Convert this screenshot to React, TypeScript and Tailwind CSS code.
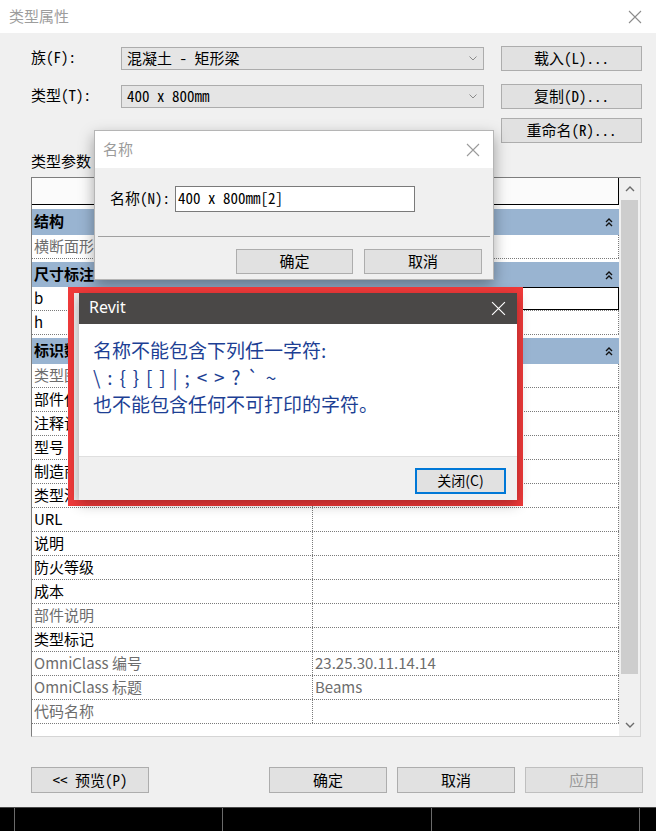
import React from "react";

const sans = "font-['Noto_Sans_CJK_SC',sans-serif]";
const song = "font-['Noto_Sans_Mono_CJK_SC','Noto_Sans_CJK_SC',monospace]";

type Row = { name: string; value?: string; gray?: boolean; selected?: boolean };
type Group = { title: string; gap: string; height: string; rows: Row[] };

const groups: Group[] = [
	{ title: "结构", gap: "mt-[4px]", height: "h-[26px]", rows: [{ name: "横断面形状", gray: true }] },
	{
		title: "尺寸标注",
		gap: "mt-[3px]",
		height: "h-[25px]",
		rows: [{ name: "b", selected: true }, { name: "h" }],
	},
	{
		title: "标识数据",
		gap: "mt-[3px]",
		height: "h-[26px]",
		rows: [
			{ name: "类型图像", gray: true },
			{ name: "部件代码" },
			{ name: "注释记号" },
			{ name: "型号" },
			{ name: "制造商" },
			{ name: "类型注释" },
			{ name: "URL" },
			{ name: "说明" },
			{ name: "防火等级" },
			{ name: "成本" },
			{ name: "部件说明", gray: true },
			{ name: "类型标记" },
			{ name: "OmniClass 编号", value: "23.25.30.11.14.14", gray: true },
			{ name: "OmniClass 标题", value: "Beams", gray: true },
			{ name: "代码名称", gray: true },
		],
	},
];

const Close = ({ color, size = 14 }: { color: string; size?: number }) => (
	<svg width={size} height={size} viewBox="0 0 14 14">
		<path d="M1 1 L13 13 M13 1 L1 13" stroke={color} strokeWidth="1.1" fill="none" />
	</svg>
);

const Collapse = () => (
	<svg width="8" height="10" viewBox="0 0 8 10">
		<path d="M1 5 L4 2 L7 5 M1 9 L4 6 L7 9" stroke="#111" strokeWidth="1.4" fill="none" />
	</svg>
);

const Chevron = ({ up, color = "#6b6b6b" }: { up?: boolean; color?: string }) => (
	<svg width="10" height="6" viewBox="0 0 10 6">
		<path d={up ? "M1 5 L5 1 L9 5" : "M1 1 L5 5 L9 1"} stroke={color} strokeWidth="1.4" fill="none" />
	</svg>
);

const Btn = ({ children, className = "" }: { children: React.ReactNode; className?: string }) => (
	<div
		className={
			"flex items-center justify-center border border-[#adadad] bg-[#e1e1e1] pb-[2px] text-[15px] leading-none text-black " +
			song +
			" " +
			className
		}
	>
		{children}
	</div>
);

const Select = ({ text }: { text: string }) => (
	<div className="flex h-[23px] w-[363px] items-center justify-between border border-[#acacac] bg-[#e5e5e5] pl-[5px] pr-[6px]">
		<span className={"pb-[3px] text-[15px] leading-none text-black " + song}>{text}</span>
		<svg width="8" height="5" viewBox="0 0 8 5">
			<path d="M0.5 0.5 L4 4 L7.5 0.5" stroke="#8a8a8a" strokeWidth="1" fill="none" />
		</svg>
	</div>
);

const App = () => {
	return (
		<div className={"relative flex h-[831px] w-[656px] flex-col overflow-hidden bg-[#f0f0f0] " + sans}>
			{/* window title */}
			<div className="flex h-[33px] shrink-0 items-center justify-between bg-white pl-[9px] pr-[14px]">
				<span className="pb-[2px] text-[15px] leading-none text-[#9d9d9d]">类型属性</span>
				<Close color="#8c8c8c" />
			</div>

			{/* family / type rows */}
			<div className="flex flex-col pl-[31px] pt-[13px]">
				<div className="flex h-[25px] items-center">
					<span className={"w-[90px] pb-[4px] text-[15px] leading-none " + song}>族(F):</span>
					<Select text="混凝土 - 矩形梁" />
					<Btn className="ml-[17px] h-[25px] w-[141px]">载入(L)...</Btn>
				</div>
				<div className="mt-[13px] flex h-[25px] items-center">
					<span className={"w-[90px] pb-[4px] text-[15px] leading-none " + song}>类型(T):</span>
					<Select text="400 x 800mm" />
					<Btn className="ml-[17px] h-[25px] w-[141px]">复制(D)...</Btn>
				</div>
				<div className="mt-[9px] flex h-[25px]">
					<Btn className="ml-[470px] h-[25px] w-[141px]">重命名(R)...</Btn>
				</div>
				<div className={"mt-[8px] flex h-[20px] items-center pb-[2px] text-[15px] leading-none " + song}>类型参数</div>
			</div>

			{/* parameter table */}
			<div className="ml-[31px] mt-[6px] flex h-[560px] w-[610px] shrink-0 border border-[#7d7d7d] border-b-[#d5d5d5] border-r-[#d5d5d5] bg-white">
				<div className="flex w-[587px] flex-col">
					<div className="h-[27px] border-b border-r border-black bg-[#fbfbfb]" />
					{groups.map((g) => (
						<div key={g.title} className={"flex flex-col " + g.gap}>
							<div
								className={
									"flex items-center justify-between bg-[#99b4d1] pl-[2px] pr-[6px] text-[15px] font-bold leading-none text-black " +
									g.height
								}
							>
								<span className="pb-[3px]">{g.title}</span>
								<Collapse />
							</div>
							{g.rows.map((r) => (
								<div
									key={r.name}
									className={
										"flex h-[24px] border-b border-dotted border-[#7a7a7a] text-[15px] leading-none " +
										(r.gray ? "text-[#6d6d6d]" : "text-black")
									}
								>
									<div className="flex w-[281px] items-center border-r border-dotted border-[#7a7a7a] pb-[3px] pl-[2px]">
										{r.name}
									</div>
									<div
										className={
											"flex flex-1 items-center pb-[3px] pl-[2px] " +
											(r.selected ? "border border-black" : "border-r border-dotted border-[#7a7a7a]")
										}
									>
										{r.value}
									</div>
								</div>
							))}
						</div>
					))}
				</div>
				<div className="flex w-[21px] flex-col items-center bg-[#f0f0f0]">
					<div className="flex h-[22px] items-center">
						<Chevron up />
					</div>
					<div className="h-[474px] w-[17px] bg-[#cdcdcd]" />
					<div className="flex-1" />
					<div className="flex h-[22px] items-center">
						<Chevron />
					</div>
				</div>
			</div>

			{/* bottom buttons */}
			<div className="mt-[30px] flex h-[26px] shrink-0 pl-[31px]">
				<Btn className="h-[26px] w-[118px]">{"<< 预览(P)"}</Btn>
				<Btn className="ml-[120px] h-[26px] w-[118px]">确定</Btn>
				<Btn className="ml-[10px] h-[26px] w-[118px]">取消</Btn>
				<Btn className="ml-[10px] h-[26px] w-[118px] border-[#bfbfbf] bg-[#cccccc] !text-[#9a9a9a]">应用</Btn>
			</div>

			{/* taskbar strip */}
			<div className="mt-[14px] flex flex-1 border-t border-[#4a4a4a] bg-black pl-[14px]">
				<div className="w-[208px] border-l border-[#6a6a6a]" />
				<div className="w-[209px] border-l border-[#6a6a6a]" />
				<div className="w-[208px] border-l border-[#6a6a6a]" />
				<div className="w-[2px] border-l border-[#6a6a6a]" />
			</div>

			{/* rename dialog */}
			<div className="absolute left-[94px] top-[130px] flex h-[150px] w-[400px] flex-col border border-[#b5b5b5] bg-[#f0f0f0] shadow-[0_6px_14px_rgba(0,0,0,0.35)]">
				<div className="flex h-[37px] items-center justify-between bg-white pl-[8px] pr-[13px]">
					<span className="pb-[2px] text-[15px] leading-none text-[#9b9b9b]">名称</span>
					<Close color="#9b9b9b" />
				</div>
				<div className="mt-[18px] flex h-[26px] items-center pl-[15px]">
					<span className={"w-[65px] pb-[4px] text-[15px] leading-none " + song}>名称(N):</span>
					<div className={"flex h-[26px] w-[240px] items-center border border-[#7a7a7a] bg-white pb-[3px] pl-[2px] text-[15px] leading-none " + song}>
						400 x 800mm[2]
					</div>
				</div>
				<div className="mx-[3px] mt-[24px] border-t border-[#a0a0a0]" />
				<div className="mt-[12px] flex justify-end gap-[11px] pr-[11px]">
					<Btn className="h-[25px] w-[117px]">确定</Btn>
					<Btn className="h-[25px] w-[118px]">取消</Btn>
				</div>
			</div>

			{/* error dialog with red highlight */}
			<div className="absolute left-[68px] top-[287px] flex h-[219px] w-[455px] border-[6px] border-[#f03a3a] bg-[#ededed] pl-[5px]">
				<div className="flex flex-1 flex-col shadow-[0_4px_12px_rgba(0,0,0,0.3)]">
					<div className="flex h-[31px] items-center justify-between bg-[#4a4847] pl-[10px] pr-[11px]">
						<span className="pb-[3px] font-['Noto_Sans',sans-serif] text-[16px] leading-none text-white">Revit</span>
						<Close color="#ffffff" size={15} />
					</div>
					<div className="flex h-[132px] flex-col bg-white pl-[14px] pt-[12px] text-[19px] leading-[27px] text-[#1d3f94]">
						<span>名称不能包含下列任一字符:</span>
						<span className="tracking-[1.3px]">{"\\ : { } [ ] | ; < > ? ` ~"}</span>
						<span>也不能包含任何不可打印的字符。</span>
					</div>
					<div className="flex flex-1 justify-end border-t border-[#dfdfdf] bg-[#f0f0f0] pr-[11px] pt-[11px]">
						<div className="flex h-[26px] w-[91px] items-center justify-center border-2 border-[#0078d7] bg-[#e1e1e1] pb-[2px] text-[14px] leading-none text-black">
							关闭(C)
						</div>
					</div>
				</div>
			</div>
		</div>
	);
};

export default App;
